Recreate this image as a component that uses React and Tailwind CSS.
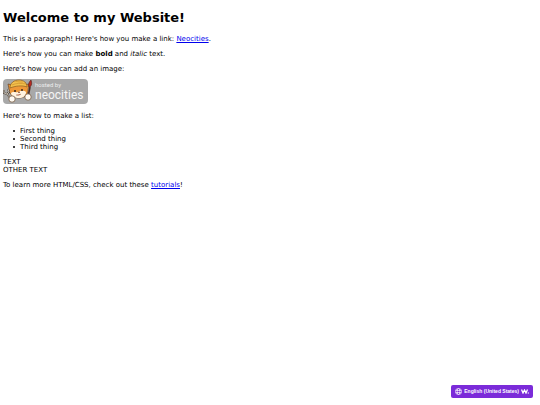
function HostedBadge() {
  return (
    <svg
      role="img"
      aria-label="Hosted by Neocities"
      viewBox="0 0 85 25"
      className="block h-[25px] w-[85px]"
    >
      <rect x="0" y="0" width="85" height="25" rx="4" fill="#a8a8a8" />
      <path d="M6 10 5 5l4 1 6-2 6 2 5-1-1 6c0 5-4 8-9 8S6 16 6 10Z" fill="#ee9838" stroke="#5b3a20" strokeWidth=".6" />
      <path d="M8 14c2-2 4 0 7-1s5-2 8 0c0 4-3 6-7 6s-8-2-8-5Z" fill="#fff3e0" />
      <path d="M7 9C7 4 11 1 16 1c5 0 8 3 8 7-5-2-12-1-17 1Z" fill="#f2c04c" stroke="#8a5a1e" strokeWidth=".7" />
      <path d="M12 2c3 1 5 1 8 1M9 6c4-2 9-2 14-1" fill="none" stroke="#c98b2c" strokeWidth=".6" />
      <circle cx="12" cy="12" r="1" fill="#38251c" />
      <circle cx="19" cy="11" r="1" fill="#38251c" />
      <path d="m15 13 2 0-1 1ZM13 16q3 1 5-1" fill="#d25a3c" stroke="#5b3a20" strokeWidth=".4" />
      <path d="m1 11 0 3 3 1 2-2-1-3M4 15l4 5" fill="none" stroke="#4c4037" strokeWidth="1.800" />
      <path d="m1 11 0 3 3 1 2-2-1-3M4 15l4 5" fill="none" stroke="#d9d4c8" strokeWidth=".8" />
      <path d="m25 18 2-10" stroke="#4b2d25" strokeWidth="1.600" />
      <path d="M26 8c-1-3 0-5 2-7 1 3 1 5-1 7Z" fill="#b82920" stroke="#52211c" strokeWidth=".6" />
      <circle cx="9" cy="20" r="3.200" fill="#fffaf2" stroke="#65472e" strokeWidth=".7" />
      <circle cx="25" cy="18" r="3.200" fill="#fffaf2" stroke="#65472e" strokeWidth=".7" />
      <text x="32" y="8" fill="#ededed" fontFamily="Roboto, sans-serif" fontSize="6">hosted by</text>
      <text x="32" y="20" fill="#f5f5f5" fontFamily="Roboto, sans-serif" fontSize="12">neocities</text>
    </svg>
  );
}

function LanguageButton() {
  return (
    <button
      type="button"
      className="fixed right-[7px] bottom-[7px] flex h-[13px] items-center gap-[2px] rounded-[2px] bg-[#7b2bd9] px-1 font-['Liberation_Sans',sans-serif] text-[5px] leading-none font-bold whitespace-nowrap text-white"
    >
      <svg aria-hidden="true" viewBox="0 0 16 16" fill="none" stroke="currentColor" strokeWidth="1.500" className="size-[7px]">
        <circle cx="8" cy="8" r="7" />
        <ellipse cx="8" cy="8" rx="3" ry="7" />
        <path d="M1.500 5.500h13M1.500 10.500h13" />
      </svg>
      <span>English (United States)</span>
      <svg aria-hidden="true" viewBox="0 0 16 10" fill="none" stroke="currentColor" strokeWidth="2.600" className="h-[5px] w-2">
        <path d="m1 1 3 7 3-6 3 6 3-7" />
        <circle cx="14.500" cy="8" r="1.300" fill="currentColor" stroke="none" />
      </svg>
    </button>
  );
}

const item = "flex items-center gap-[5px] before:size-[2px] before:rounded-full before:bg-black";

export default function App() {
  return (
    <div className="min-h-screen bg-white font-['DejaVu_Sans',sans-serif] text-[7px] leading-[8px] text-black">
      <main className="px-[3px] pt-[9px]">
        <h1 className="text-[13px] leading-[17px] font-bold">Welcome to my Website!</h1>
        <p className="mt-[9px]">
          This is a paragraph! Here's how you make a link:{" "}
          <a href="https://neocities.org" className="text-[#0000ee] underline">Neocities</a>.
        </p>
        <p className="mt-[7px]">
          Here's how you can make <strong>bold</strong> and <em>italic</em> text.
        </p>
        <p className="mt-[7px]">Here's how you can add an image:</p>
        <div className="mt-[6px]"><HostedBadge /></div>
        <p className="mt-[8px]">Here's how to make a list:</p>
        <ul className="mt-[7px] pl-[10px]">
          <li className={item}>First thing</li>
          <li className={item}>Second thing</li>
          <li className={item}>Third thing</li>
        </ul>
        <div className="mt-[7px]">TEXT</div>
        <div>OTHER TEXT</div>
        <p className="mt-[7px]">
          To learn more HTML/CSS, check out these{" "}
          <a href="https://neocities.org/tutorials" className="text-[#0000ee] underline">tutorials</a>!
        </p>
      </main>
      <LanguageButton />
    </div>
  );
}
